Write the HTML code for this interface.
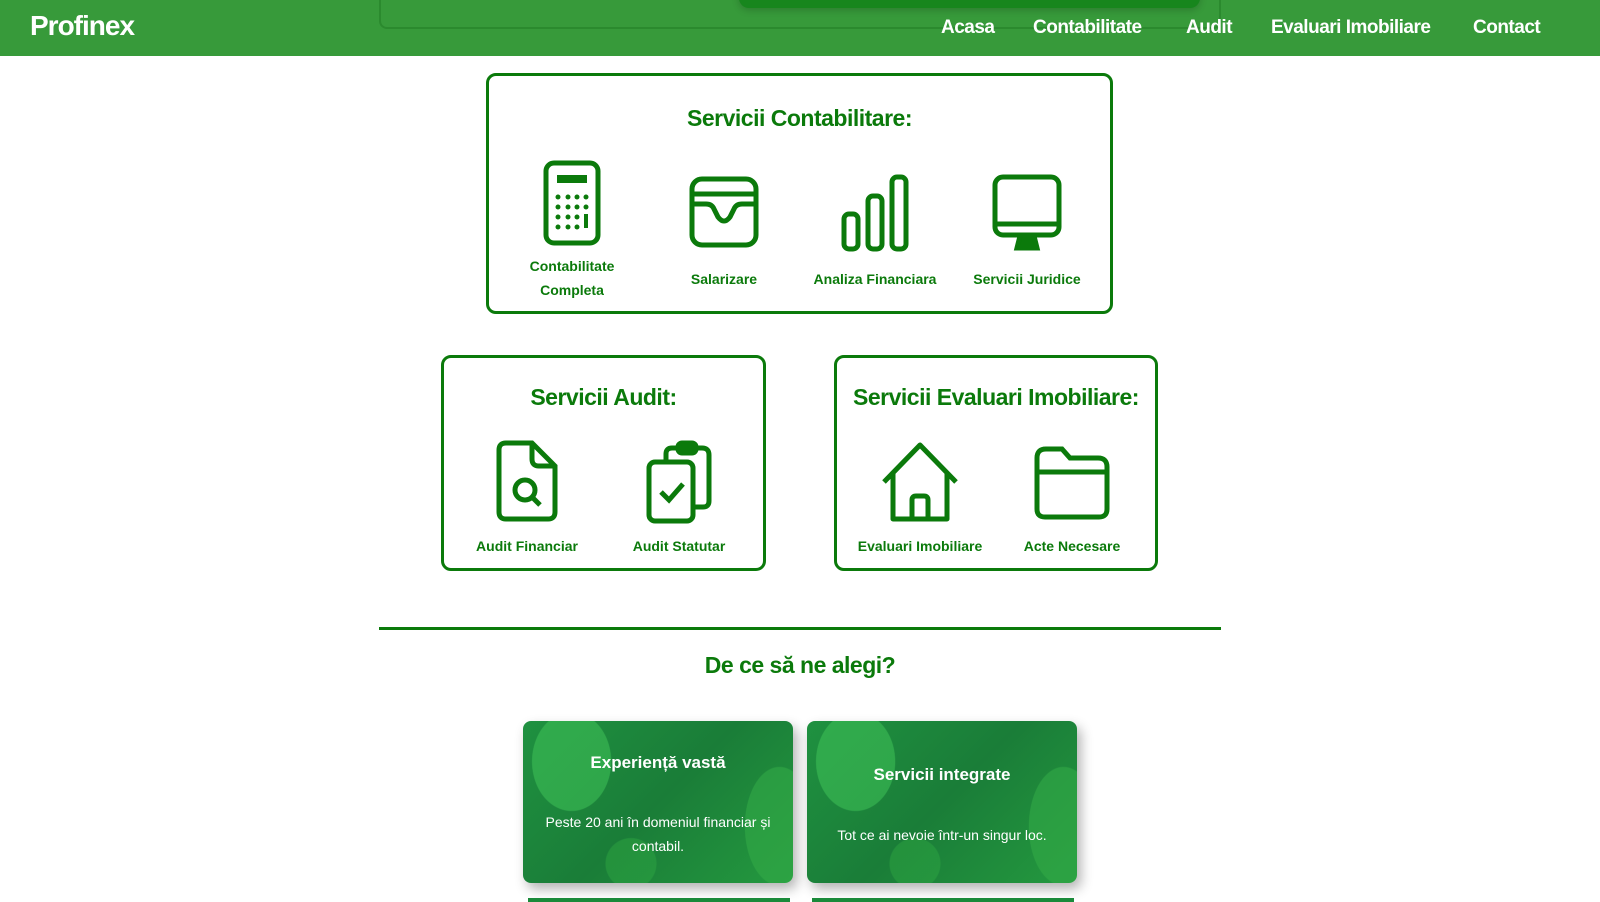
<!DOCTYPE html>
<html><head><meta charset="utf-8"><style>
*{margin:0;padding:0;box-sizing:border-box}
body{width:1600px;height:900px;overflow:hidden;background:#fff;font-family:"Liberation Sans",sans-serif;position:relative;color:#0b7a0b}
.nav{position:absolute;left:0;top:0;width:1600px;height:56px;background:#379a3a}
.logo{position:absolute;left:30px;top:10px;font-size:28px;font-weight:bold;color:#fff;letter-spacing:-1px}
.nav a{position:absolute;top:17px;font-size:19px;font-weight:bold;color:#fff;text-decoration:none;letter-spacing:-0.5px}
.ghost{position:absolute;left:379px;top:-10px;width:842px;height:39px;border:2px solid #2b8a2e;border-top:none;border-radius:0 0 8px 8px}
.ghostbar{position:absolute;left:739px;top:-10px;width:461px;height:18px;background:#17861d;border-radius:0 0 10px 10px;box-shadow:0 2px 8px rgba(0,0,0,.2)}
.box{position:absolute;border:3px solid #0b7a0b;border-radius:10px}
.box h2{position:absolute;left:0;right:0;text-align:center;font-size:23px;font-weight:bold;letter-spacing:-0.5px}
.item{position:absolute;width:150px;text-align:center;font-size:14px;font-weight:bold;line-height:24px}
.item svg{display:block;margin:0 auto}
hr{position:absolute;left:379px;top:627px;width:842px;border:none;height:3px;background:#0b7a0b}
.why{position:absolute;left:0;width:1600px;top:652px;text-align:center;font-size:23px;font-weight:bold;letter-spacing:-0.5px}
.card{position:absolute;top:721px;width:270px;height:162px;border-radius:8px;overflow:hidden;color:#fff;text-align:center;box-shadow:4px 6px 12px rgba(0,0,0,.3);
background:radial-gradient(ellipse 40px 50px at 18% 25%,rgba(60,190,85,.6) 0 98%,transparent 100%),radial-gradient(ellipse 35px 60px at 95% 65%,rgba(50,170,70,.6) 0 98%,transparent 100%),radial-gradient(circle at 40% 88%,rgba(45,165,65,.5) 0 25px,transparent 26px),linear-gradient(135deg,#1f9140,#1a7d38 50%,#24993f)}
.card h3{position:absolute;left:0;right:0;font-size:17px;font-weight:bold}
.card p{position:absolute;left:10px;right:10px;font-size:14px;line-height:24px}
</style></head><body>
<div class="nav">
<div class="ghost"></div><div class="ghostbar"></div>
<div class="logo">Profinex</div>
<a style="left:941px">Acasa</a><a style="left:1033px">Contabilitate</a><a style="left:1186px">Audit</a><a style="left:1271px">Evaluari Imobiliare</a><a style="left:1473px">Contact</a>
</div>

<div class="box" style="left:486px;top:73px;width:627px;height:241px">
<h2 style="top:29px">Servicii Contabilitare:</h2>
<div class="item" style="left:8px;top:84px"><svg width="60" height="86" viewBox="0 0 60 86" fill="none" stroke="#0b7a0b" stroke-width="5"><rect x="4" y="3" width="52" height="80" rx="8"/><rect x="15" y="15" width="30" height="8" fill="#0b7a0b" stroke="none"/><g fill="#0b7a0b" stroke="none"><circle cx="16" cy="37" r="2.5"/><circle cx="26" cy="37" r="2.5"/><circle cx="35" cy="37" r="2.5"/><circle cx="44" cy="37" r="2.5"/><circle cx="16" cy="47" r="2.5"/><circle cx="26" cy="47" r="2.5"/><circle cx="35" cy="47" r="2.5"/><circle cx="44" cy="47" r="2.5"/><circle cx="16" cy="57" r="2.5"/><circle cx="26" cy="57" r="2.5"/><circle cx="35" cy="57" r="2.5"/><circle cx="16" cy="67" r="2.5"/><circle cx="26" cy="67" r="2.5"/><circle cx="35" cy="67" r="2.5"/><rect x="42" y="54" width="4" height="14"/></g></svg><div style="margin-top:8px">Contabilitate<br>Completa</div></div>
<div class="item" style="left:160px;top:100px"><svg width="70" height="72" viewBox="0 0 70 72" fill="none" stroke="#0b7a0b" stroke-width="5"><rect x="3" y="3" width="64" height="66" rx="10"/><path d="M3 18H67M3 28h14q6 0 8 5l4 8q6 8 12 0l4-8q2-5 8-5h14"/></svg><div style="margin-top:19px">Salarizare</div></div>
<div class="item" style="left:311px;top:98px"><svg width="70" height="78" viewBox="0 0 70 78" fill="none" stroke="#0b7a0b" stroke-width="5"><rect x="4" y="40" width="14" height="35" rx="5"/><rect x="28" y="22" width="14" height="53" rx="5"/><rect x="52" y="3" width="14" height="72" rx="5"/></svg><div style="margin-top:15px">Analiza Financiara</div></div>
<div class="item" style="left:463px;top:98px"><svg width="70" height="78" viewBox="0 0 70 78" fill="none" stroke="#0b7a0b" stroke-width="5"><rect x="3" y="3" width="64" height="58" rx="8"/><path d="M3 50H67"/><path d="M28 62l-3 12h20l-3-12" fill="#0b7a0b"/></svg><div style="margin-top:15px">Servicii Juridice</div></div>
</div>

<div class="box" style="left:441px;top:355px;width:325px;height:216px">
<h2 style="top:26px">Servicii Audit:</h2>
<div class="item" style="left:8px;top:82px"><svg width="62" height="82" viewBox="0 0 62 82" fill="none" stroke="#0b7a0b" stroke-width="5"><path d="M10 3h26l23 23v46q0 7-7 7H10q-7 0-7-7V10q0-7 7-7z"/><path d="M36 3v16q0 7 7 7h16"/><circle cx="29" cy="50" r="10"/><path d="M36 57l8 8"/></svg><div style="margin-top:12px">Audit Financiar</div></div>
<div class="item" style="left:160px;top:82px"><svg width="66" height="84" viewBox="0 0 66 84" fill="none" stroke="#0b7a0b" stroke-width="5"><rect x="3" y="22" width="44" height="59" rx="6"/><path d="M20 20V14q0-6 6-6h30q7 0 7 7v46q0 6-6 6h-10"/><rect x="32" y="3" width="18" height="10" rx="4"/><path d="M15 52l8 8 14-16"/></svg><div style="margin-top:10px">Audit Statutar</div></div>
</div>

<div class="box" style="left:834px;top:355px;width:324px;height:216px">
<h2 style="top:26px">Servicii Evaluari Imobiliare:</h2>
<div class="item" style="left:8px;top:82px"><svg width="78" height="82" viewBox="0 0 78 82" fill="none" stroke="#0b7a0b" stroke-width="5" stroke-linejoin="round"><path d="M3 42L39 5l36 37M12 33v46h54V33"/><path d="M31 79V60q0-4 4-4h8q4 0 4 4v19"/></svg><div style="margin-top:12px">Evaluari Imobiliare</div></div>
<div class="item" style="left:160px;top:88px"><svg width="76" height="74" viewBox="0 0 76 74" fill="none" stroke="#0b7a0b" stroke-width="5"><path d="M3 12q0-9 9-9h16l8 9h28q9 0 9 9v42q0 8-8 8H11q-8 0-8-8z"/><path d="M3 26h70"/></svg><div style="margin-top:14px">Acte Necesare</div></div>
</div>

<hr>
<div class="why">De ce să ne alegi?</div>
<div class="card" style="left:523px"><h3 style="top:32px">Experiență vastă</h3><p style="top:89px">Peste 20 ani în domeniul financiar și contabil.</p></div>
<div class="card" style="left:807px"><h3 style="top:44px">Servicii integrate</h3><p style="top:102px">Tot ce ai nevoie într-un singur loc.</p></div>
<div style="position:absolute;left:528px;top:898px;width:262px;height:4px;background:#1a8a3a"></div>
<div style="position:absolute;left:812px;top:898px;width:262px;height:4px;background:#1a8a3a"></div>
</body></html>
